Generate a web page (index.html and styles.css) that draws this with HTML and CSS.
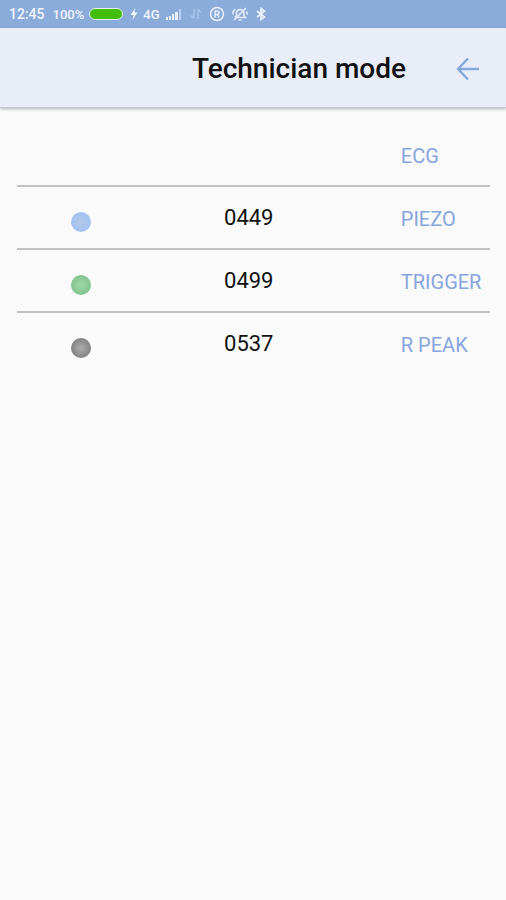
FILE: index.html
```
<!DOCTYPE html>
<html lang="en">
<head>
    <meta charset="UTF-8">
    <meta name="viewport" content="width=device-width, initial-scale=1.0">
    <title>Technician mode</title>
    <link rel="stylesheet" href="styles.css">
</head>
<body>
    <!-- Status bar -->
    <div class="status-bar">
        <span class="time">12:45</span>
        <span class="percent">100%</span>
        <span class="battery"></span>
        <svg class="bolt" width="8" height="14" viewBox="0 0 8 14">
            <path d="M5 1 L0.5 8 H3.5 L2.5 13 L7.5 5.5 H4.5 Z" fill="#f1f6ff"/>
        </svg>
        <span class="network">4G</span>
        <svg class="signal" width="16" height="12" viewBox="0 0 16 12" fill="#e9f0fc">
            <rect x="0" y="9" width="2" height="3"/>
            <rect x="3" y="8" width="2" height="4"/>
            <rect x="6" y="6" width="2" height="6"/>
            <rect x="9" y="4" width="3" height="8"/>
            <rect x="13" y="1" width="2" height="11" opacity="0.5"/>
        </svg>
        <svg class="data" width="12" height="12" viewBox="0 0 12 12" fill="none" stroke="#b0c6ea" stroke-width="1.4">
            <path d="M4 1 V10.5 M1 7.5 L4 10.5 M8 11 V1.5 M8 1.5 L11 4.5"/>
        </svg>
        <svg class="registered" width="16" height="16" viewBox="0 0 16 16" fill="none" stroke="#eaf1fd" stroke-width="1.5">
            <circle cx="8" cy="8" r="6.5"/>
            <path d="M6.2 11.5 V5 H8.3 A1.7 1.7 0 0 1 8.3 8.5 H6.2 M8.3 8.5 L10 11.5"/>
        </svg>
        <svg class="muted" width="16" height="16" viewBox="0 0 16 16" fill="none" stroke="#e3ecfb" stroke-width="1.6">
            <path d="M3 11.5 L4.5 9.5 V6.5 A3.8 3.8 0 0 1 11.8 6 V9.5 L13.5 11.5 H3 M6.5 14 H9.5 M2 14 L14 2 M1 8.5 V6 L3 3 M15 5.5 V8.5"/>
        </svg>
        <svg class="bluetooth" width="10" height="14" viewBox="0 0 10 14" fill="none" stroke="#eaf1fd" stroke-width="1.7">
            <path d="M1 4 L8.5 10 L5 12.5 V1.5 L8.5 4 L1 10"/>
        </svg>
    </div>

    <!-- Header -->
    <header class="header">
        <h1>Technician mode</h1>
        <button class="back" type="button" aria-label="Back">
            <svg width="24" height="24" viewBox="0 0 24 24" fill="none" stroke="#82a8dc" stroke-width="2.4">
                <path d="M23 12 H2.5 M12 1.5 L2 12 L12 22.5"/>
            </svg>
        </button>
    </header>

    <!-- Signals -->
    <main>
        <table class="signals">
            <tr>
                <td class="led"></td>
                <td class="value"></td>
                <th scope="row">ECG</th>
            </tr>
            <tr>
                <td class="led"><span class="dot blue"></span></td>
                <td class="value">0449</td>
                <th scope="row">PIEZO</th>
            </tr>
            <tr>
                <td class="led"><span class="dot green"></span></td>
                <td class="value">0499</td>
                <th scope="row">TRIGGER</th>
            </tr>
            <tr>
                <td class="led"><span class="dot gray"></span></td>
                <td class="value">0537</td>
                <th scope="row">R PEAK</th>
            </tr>
        </table>
    </main>
</body>
</html>
```
FILE: styles.css
```
* {
    box-sizing: border-box;
}
body {
    margin: 0;
    min-height: 100vh;
    background-color: #fafafa;
    font-family: Roboto, "Liberation Sans", sans-serif;
    color: #111;
}

/* Status bar */
.status-bar {
    display: flex;
    align-items: center;
    height: 28px;
    padding-left: 9px;
    background-color: #8babda;
    color: #f1f6ff;
    font-size: 14px;
    font-weight: 500;
}
.percent {
    margin-left: 8px;
    font-size: 13px;
}
.battery {
    width: 34px;
    height: 12px;
    margin-left: 5px;
    border: 1px solid #e0efe9;
    border-radius: 6px;
    background-color: #43bd0b;
}
.bolt {
    margin-left: 7px;
}
.network {
    margin-left: 5px;
    font-size: 13px;
}
.signal {
    margin-left: 6px;
}
.data {
    margin-left: 8px;
}
.registered {
    margin-left: 7px;
}
.muted {
    margin-left: 7px;
}
.bluetooth {
    margin-left: 8px;
}

/* Header */
.header {
    display: flex;
    align-items: center;
    justify-content: flex-end;
    height: 80px;
    padding-top: 2px;
    padding-right: 26px;
    background-color: #e8edf8;
    border-bottom: 1px solid #c8cad0;
    box-shadow: 0 1px 3px rgba(0, 0, 0, 0.3);
}
.header h1 {
    margin: 0;
    font-size: 28px;
    font-weight: 500;
}
.back {
    display: flex;
    margin-left: 50px;
    padding: 0;
    border: none;
    background: none;
    cursor: pointer;
}

/* Signals */
main {
    padding: 16px 16px 0 17px;
}
.signals {
    width: 100%;
    table-layout: fixed;
    border-spacing: 0;
}
.signals td,
.signals th {
    height: 63px;
    padding: 0;
    border-bottom: 2px solid #c2c2c2;
}
.signals tr:last-child td,
.signals tr:last-child th {
    border-bottom-color: transparent;
}
.signals .led {
    width: 27%;
    padding-top: 9px;
}
.signals .value {
    width: 44%;
    font-size: 22px;
    text-align: center;
}
.signals th {
    padding-top: 2px;
    padding-left: 48px;
    color: #86a5de;
    font-size: 20px;
    font-weight: 400;
    text-align: left;
    white-space: nowrap;
}
.dot {
    display: block;
    width: 20px;
    height: 20px;
    margin: 0 auto;
    border-radius: 50%;
}
.blue {
    background: radial-gradient(circle, #adc6ea 20%, #a3c2f4 70%);
}
.green {
    background: radial-gradient(circle, #98d2a2 20%, #82c58f 70%);
}
.gray {
    background: radial-gradient(circle, #a8a8a8 10%, #828282 70%);
}
```
